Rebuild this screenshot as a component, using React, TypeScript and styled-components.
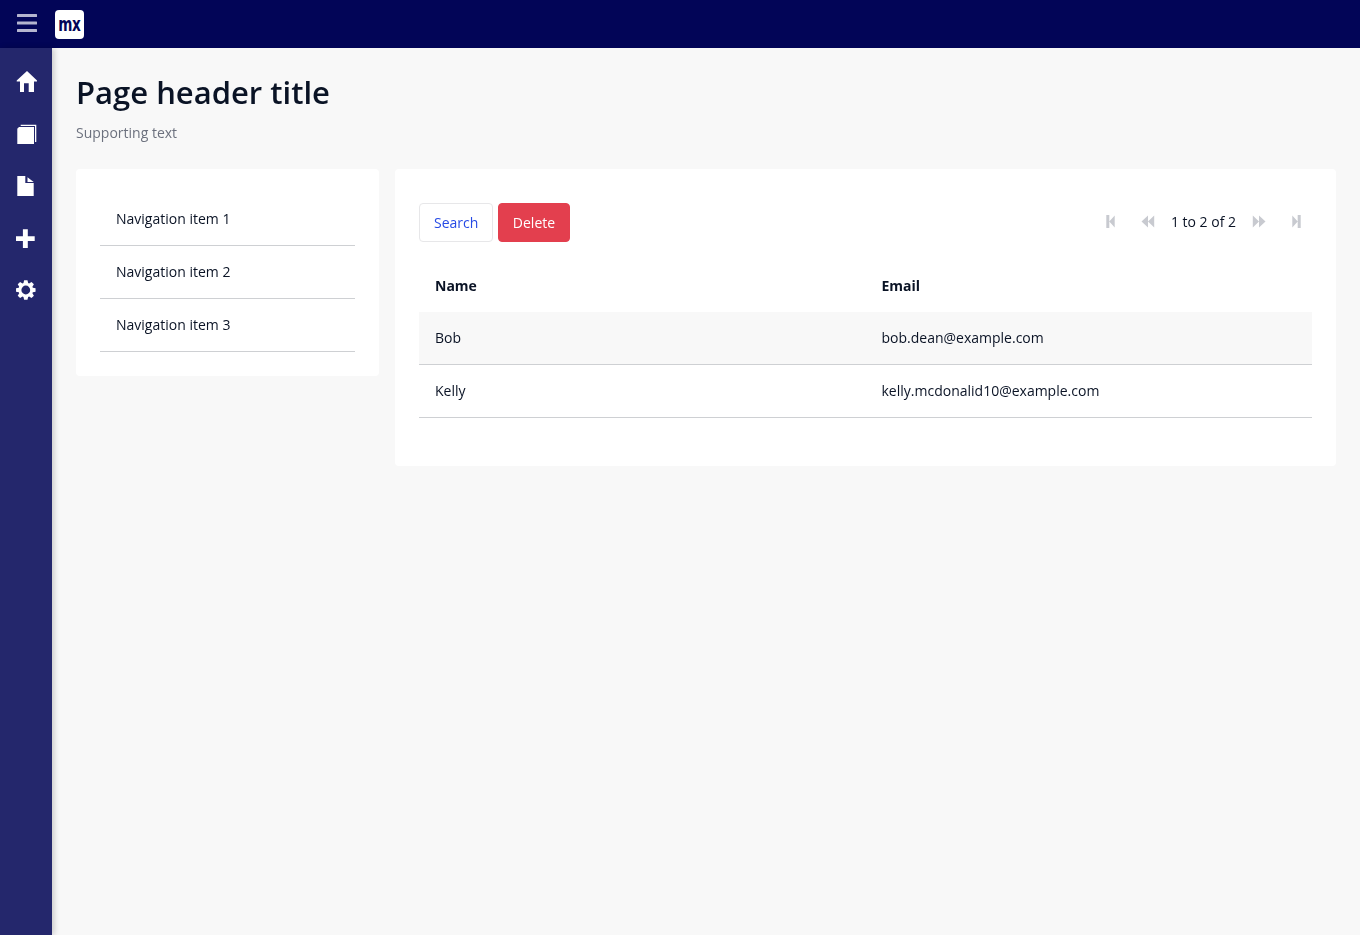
import styled, { createGlobalStyle } from "styled-components";

const GlobalStyle = createGlobalStyle`
  html, body {
    margin: 0;
    padding: 0;
    height: 100%;
    background: #f8f8f8;
    font-family: "Open Sans", sans-serif;
    font-size: 14px;
    color: #0a1325;
  }
  #root {
    height: 100%;
  }
`;

const Page = styled.div`
  display: flex;
  flex-direction: column;
  height: 935px;
  overflow: hidden;
`;

const TopBar = styled.header`
  display: flex;
  align-items: center;
  height: 48px;
  flex: none;
  background: #020557;
`;

const MenuToggle = styled.button`
  display: flex;
  align-items: center;
  justify-content: center;
  width: 54px;
  height: 48px;
  padding: 0 0 2px;
  border: 0;
  background: none;
`;

const Logo = styled.div`
  display: flex;
  align-items: center;
  justify-content: center;
  width: 29px;
  height: 29px;
  margin-left: 1px;
  border-radius: 4px;
  background: #fff;
`;

const LogoText = styled.span`
  display: block;
  color: #020557;
  font-family: "DejaVu Sans", sans-serif;
  font-size: 20px;
  font-weight: 700;
  line-height: 24px;
  letter-spacing: -0.5px;
  transform: scaleX(0.68);
`;

const Body = styled.div`
  display: flex;
  flex: 1;
  min-height: 0;
`;

const SideBar = styled.nav`
  display: flex;
  flex-direction: column;
  align-items: center;
  width: 52px;
  flex: none;
  padding-top: 8px;
  box-sizing: border-box;
  background: #24276c;
  box-shadow: 2px 0 6px rgba(0, 0, 0, 0.2);
`;

const SideItem = styled.a`
  display: flex;
  align-items: center;
  justify-content: center;
  width: 52px;
  height: 52px;
  flex: none;
  color: #fff;
`;

const Content = styled.main`
  flex: 1;
  min-width: 0;
  padding: 24px;
  will-change: transform;
`;

const Title = styled.h1`
  margin: 0;
  font-size: 31px;
  font-weight: 600;
  line-height: 40px;
  color: #0a1325;
`;

const Subtitle = styled.p`
  margin: 10px 0 0;
  font-size: 14px;
  line-height: 21px;
  color: #6c717e;
`;

const Columns = styled.div`
  display: grid;
  grid-template-columns: 303px 941px;
  gap: 16px;
  align-items: start;
  margin-top: 26px;
`;

const Card = styled.section`
  padding: 24px;
  border-radius: 4px;
  background: #fff;
`;

const NavItem = styled.a`
  display: flex;
  align-items: center;
  box-sizing: border-box;
  height: 53px;
  padding: 0 16px 2px;
  border-bottom: 1px solid #ced0d3;
  color: #0a1325;
`;

const Toolbar = styled.div`
  display: flex;
  align-items: center;
  justify-content: space-between;
  margin-top: 10px;
  height: 39px;
`;

const ButtonGroup = styled.div`
  display: flex;
  gap: 5px;
`;

const Button = styled.button<{ $danger?: boolean }>`
  height: 39px;
  padding: 0 ${(p) => (p.$danger ? "13.5px" : "14px")};
  border: 1px solid ${(p) => (p.$danger ? "#e33f4e" : "#e7e7e9")};
  border-radius: 4px;
  background: ${(p) => (p.$danger ? "#e33f4e" : "#fff")};
  color: ${(p) => (p.$danger ? "#fff" : "#264ae5")};
  font-family: inherit;
  font-size: 14px;
`;

const Pager = styled.div`
  display: flex;
  align-items: center;
  margin-right: -3px;
  padding-bottom: 2px;
  color: #0a1325;
`;

const PagerButton = styled.span`
  display: flex;
  align-items: center;
  justify-content: center;
  width: 37.5px;
  height: 38px;
  color: #c8cad0;
`;

const PagerText = styled.span`
  margin: 0 4px;
  white-space: nowrap;
`;

const StepSvg = styled.svg<{ $flip?: boolean }>`
  transform: ${(p) => (p.$flip ? "scaleX(-1)" : "none")};
`;

const Table = styled.div`
  margin: 22px 0 24px;
`;

const Row = styled.div<{ $head?: boolean; $shaded?: boolean }>`
  display: grid;
  grid-template-columns: 446.5px 1fr;
  align-items: center;
  box-sizing: border-box;
  height: ${(p) => (p.$head ? "48px" : "53px")};
  padding: 0 16px ${(p) => (p.$head ? "6px" : "2px")};
  border-bottom: ${(p) => (p.$head ? "0" : "1px solid #ced0d3")};
  background: ${(p) => (p.$shaded ? "#f8f8f8" : "transparent")};
  font-weight: ${(p) => (p.$head ? 700 : 400)};
`;

// eight-tooth gear around 10,10
const gearPoints = Array.from({ length: 8 }).flatMap((_, i) => {
  const a = (i * Math.PI) / 4;
  const pt = (r: number, off: number) =>
    `${(9.8 + r * Math.sin(a + off)).toFixed(2)} ${(10 - r * Math.cos(a + off)).toFixed(2)}`;
  return [pt(7.4, -0.32), pt(9.9, -0.17), pt(9.9, 0.17), pt(7.4, 0.32)];
});
const gearPath = `M${gearPoints.join(" L")} Z M9.8 5.6 A4.4 4.4 0 1 0 9.8 14.4 A4.4 4.4 0 1 0 9.8 5.6 Z`;

const HomeIcon = () => (
  <svg width="22" height="22" viewBox="0 0 22 22" fill="currentColor">
    <path d="M12 0 L22 9.5 V10.5 H19 V21 H13.7 V12.3 H9 V21 H5 V10.5 H1.7 V9.5 Z" />
  </svg>
);

const BookIcon = () => (
  <svg width="22" height="20" viewBox="0 0 22 20" fill="currentColor">
    <path d="M5.7 0.7 H21.3 V18 H20 V2 H5.7 Z" />
    <path d="M4 3 H19 V20 H2.3 V4.7 Z" />
  </svg>
);

const FileIcon = () => (
  <svg width="18" height="20" viewBox="0 0 18 20" fill="currentColor">
    <path d="M0.3 0 H8.3 V7 H16.7 V20 H0.3 Z" />
    <path d="M10.5 1.3 L16.7 6 H10.5 Z" />
  </svg>
);

const PlusIcon = () => (
  <svg width="20" height="20" viewBox="0 0 20 20" fill="currentColor">
    <path d="M6.9 1.3 H11.8 V8.2 H18.7 V13.1 H11.8 V20 H6.9 V13.1 H0 V8.2 H6.9 Z" />
  </svg>
);

const GearIcon = () => (
  <svg width="20" height="20" viewBox="0 0 20 20" fill="currentColor">
    <path fillRule="evenodd" d={gearPath} />
  </svg>
);

const StepIcon = ({ flip, bar }: { flip?: boolean; bar?: boolean }) => (
  <StepSvg $flip={flip} width="14" height="13" viewBox="0 0 14 13" fill="currentColor">
    {bar ? (
      <path d="M2.3 0 H5.3 V13 H2.3 Z M5.3 6.5 L10.7 0.4 V12.6 Z" />
    ) : (
      <path d="M0.5 6.5 L7 0.4 V12.6 Z M7 6.5 L13.2 0.4 V12.6 Z" />
    )}
  </StepSvg>
);

const App = () => {
  const navItems = ["Navigation item 1", "Navigation item 2", "Navigation item 3"];
  const people = [
    { name: "Bob", email: "bob.dean@example.com" },
    { name: "Kelly", email: "kelly.mcdonalid10@example.com" },
  ];

  return (
    <Page>
      <GlobalStyle />
      <TopBar>
        <MenuToggle>
          <svg width="20" height="18" viewBox="0 0 20 18" fill="#b4b5cf">
            <rect y="0" width="20" height="3" rx="0.5" />
            <rect y="7.5" width="20" height="3" rx="0.5" />
            <rect y="15" width="20" height="3" rx="0.5" />
          </svg>
        </MenuToggle>
        <Logo>
          <LogoText>mx</LogoText>
        </Logo>
      </TopBar>
      <Body>
        <SideBar>
          <SideItem><HomeIcon /></SideItem>
          <SideItem><BookIcon /></SideItem>
          <SideItem><FileIcon /></SideItem>
          <SideItem><PlusIcon /></SideItem>
          <SideItem><GearIcon /></SideItem>
        </SideBar>
        <Content>
          <Title>Page header title</Title>
          <Subtitle>Supporting text</Subtitle>
          <Columns>
            <Card>
              {navItems.map((item) => (
                <NavItem key={item}>{item}</NavItem>
              ))}
            </Card>
            <Card>
              <Toolbar>
                <ButtonGroup>
                  <Button>Search</Button>
                  <Button $danger>Delete</Button>
                </ButtonGroup>
                <Pager>
                  <PagerButton><StepIcon bar /></PagerButton>
                  <PagerButton><StepIcon /></PagerButton>
                  <PagerText>1 to 2 of 2</PagerText>
                  <PagerButton><StepIcon flip /></PagerButton>
                  <PagerButton><StepIcon flip bar /></PagerButton>
                </Pager>
              </Toolbar>
              <Table>
                <Row $head>
                  <span>Name</span>
                  <span>Email</span>
                </Row>
                {people.map((p, i) => (
                  <Row key={p.name} $shaded={i === 0}>
                    <span>{p.name}</span>
                    <span>{p.email}</span>
                  </Row>
                ))}
              </Table>
            </Card>
          </Columns>
        </Content>
      </Body>
    </Page>
  );
};

export default App;
